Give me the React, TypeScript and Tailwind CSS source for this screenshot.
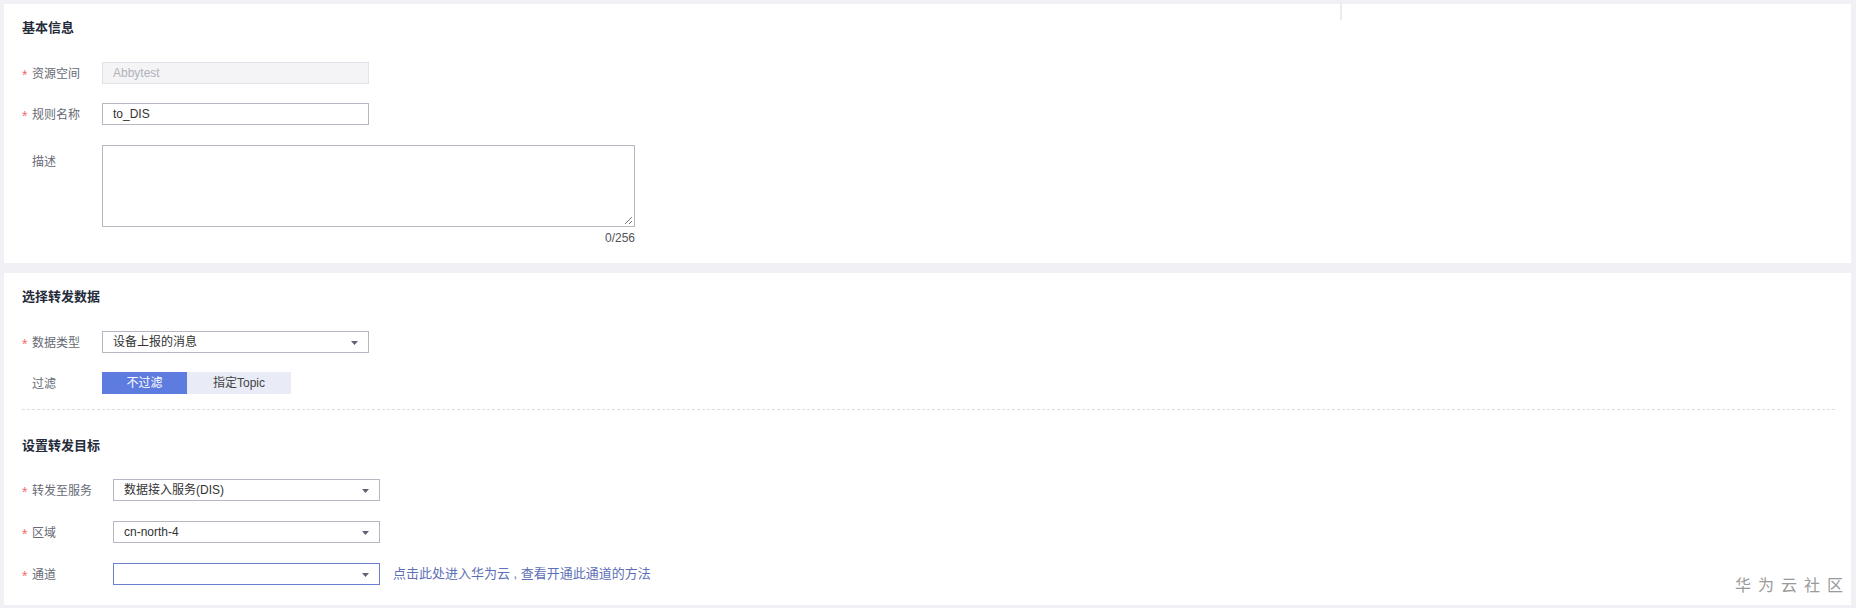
import React from "react";

const font = { fontFamily: '"Liberation Sans", "Noto Sans CJK SC", sans-serif' };

function Label({ text, required, w }: { text: string; required?: boolean; w: string }) {
  return (
    <div className={`${w} shrink-0 flex items-center h-[22px] pt-[2px] text-[12px] text-[#666a75]`}>
      <span className={`w-[10px] text-[14px] leading-none translate-y-[1px] ${required ? "text-[#f26b6b]" : "text-transparent"}`}>*</span>
      <span>{text}</span>
    </div>
  );
}

function Arrow() {
  return (
    <svg width="7" height="4" viewBox="0 0 7 4" className="absolute right-[10px] top-[9px]">
      <path d="M0 0 L7 0 L3.5 4 Z" fill="#5f6470" />
    </svg>
  );
}

function Select({ value, focus }: { value: string; focus?: boolean }) {
  return (
    <div
      className={`relative w-[267px] h-[22px] border ${focus ? "border-[#6a7fd0]" : "border-[#b5b8c0]"} bg-white flex items-center pl-[10px] text-[12px] text-[#333]`}
    >
      {value}
      <Arrow />
    </div>
  );
}

export default function App() {
  return (
    <div className="w-[1856px] h-[608px] bg-[#f0f0f5] pt-[4px] pb-[3px] pl-[4px] pr-[5px] relative overflow-hidden" style={font}>
      <div className="absolute left-[1340px] top-[3px] w-[2px] h-[17px] bg-[#ebebf0]" />
      {/* Card 1 */}
      <div className="bg-white h-[259px] pt-[14px] pl-[18px] flex flex-col">
        <div className="h-[20px] leading-[20px] text-[13px] font-bold text-[#252b3a]">基本信息</div>
        <div className="mt-[24px] flex">
          <Label text="资源空间" required w="w-[80px]" />
          <div className="w-[267px] h-[22px] border border-[#e2e3e8] bg-[#f4f4f6] flex items-center pl-[10px] text-[12px] text-[#b0b3ba]">
            Abbytest
          </div>
        </div>
        <div className="mt-[19px] flex">
          <Label text="规则名称" required w="w-[80px]" />
          <div className="w-[267px] h-[22px] border border-[#b5b8c0] bg-white flex items-center pl-[10px] text-[12px] text-[#333]">
            to_DIS
          </div>
        </div>
        <div className="mt-[20px] flex">
          <div className="w-[80px] shrink-0 pl-[10px] pt-[8px] text-[12px] text-[#666a75]">描述</div>
          <div className="flex flex-col items-end">
            <div className="relative w-[533px] h-[82px] border border-[#b5b8c0] bg-white">
              <svg width="10" height="10" viewBox="0 0 10 10" className="absolute right-[1px] bottom-[1px]">
                <path d="M9 2 L2 9 M9 6 L6 9" stroke="#777" strokeWidth="1" />
              </svg>
            </div>
            <div className="mt-[4px] text-[12px] leading-[14px] text-[#555]">0/256</div>
          </div>
        </div>
      </div>

      {/* Card 2 */}
      <div className="relative bg-white mt-[10px] h-[332px] pt-[14px] pl-[18px] pr-[16px] flex flex-col">
        <div className="h-[20px] leading-[20px] text-[13px] font-bold text-[#252b3a]">选择转发数据</div>
        <div className="mt-[24px] flex">
          <Label text="数据类型" required w="w-[80px]" />
          <Select value="设备上报的消息" />
        </div>
        <div className="mt-[19px] flex">
          <div className="w-[80px] shrink-0 flex items-center h-[22px] pt-[2px] pl-[10px] text-[12px] text-[#666a75]">过滤</div>
          <div className="flex h-[22px] text-[12px]">
            <div className="w-[85px] bg-[#5e7ce0] text-white flex items-center justify-center">不过滤</div>
            <div className="w-[104px] bg-[#e9ecf6] text-[#444] flex items-center justify-center">指定Topic</div>
          </div>
        </div>
        <div className="mt-[15px] border-t border-dashed border-[#dcdde2] w-[1813px]" />
        <div className="mt-[26px] h-[20px] leading-[20px] text-[13px] font-bold text-[#252b3a]">设置转发目标</div>
        <div className="mt-[23px] flex">
          <Label text="转发至服务" required w="w-[91px]" />
          <Select value="数据接入服务(DIS)" />
        </div>
        <div className="mt-[20px] flex">
          <Label text="区域" required w="w-[91px]" />
          <Select value="cn-north-4" />
        </div>
        <div className="mt-[20px] flex items-center">
          <Label text="通道" required w="w-[91px]" />
          <Select value="" focus />
          <span className="ml-[13px] text-[13px] text-[#5e6fb8]">点击此处进入华为云 , 查看开通此通道的方法</span>
        </div>
        <div
          className="absolute left-[1731px] top-[299px] text-[16px] tracking-[7px] text-[#9a9a9a]"
          style={{ fontFamily: '"Noto Sans CJK SC", sans-serif' }}
        >
          华为云社区
        </div>
      </div>
    </div>
  );
}
